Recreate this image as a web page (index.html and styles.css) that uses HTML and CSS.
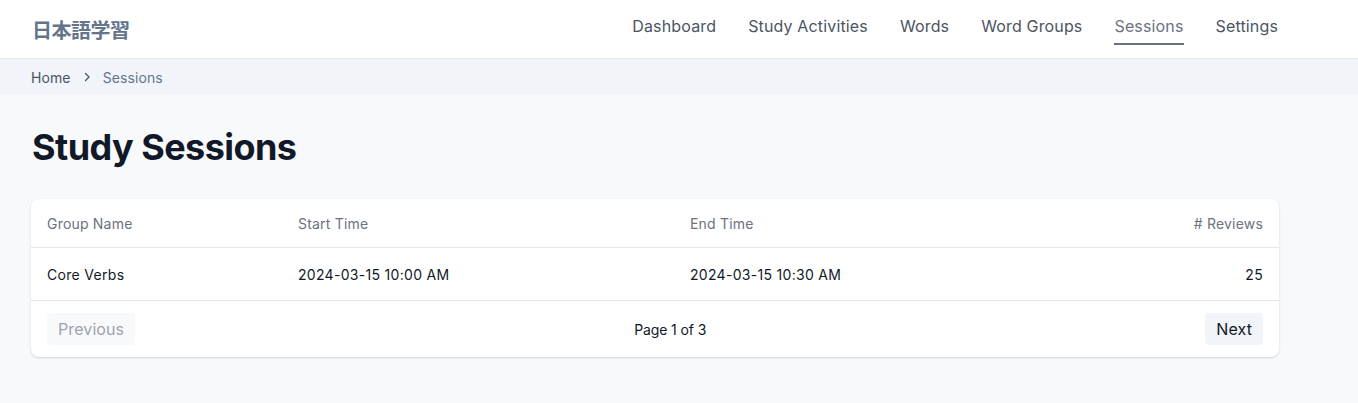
FILE: index.html
```html
<!DOCTYPE html>
<html lang="ja">
<head>
<meta charset="utf-8">
<title>日本語学習 - Sessions</title>
<link rel="stylesheet" href="styles.css">
</head>
<body>
<header class="topbar">
  <div class="container topbar-inner">
    <div class="logo">日本語学習</div>
    <nav class="nav">
      <a class="nav-link">Dashboard</a>
      <a class="nav-link">Study Activities</a>
      <a class="nav-link">Words</a>
      <a class="nav-link">Word Groups</a>
      <a class="nav-link active">Sessions</a>
      <a class="nav-link">Settings</a>
    </nav>
  </div>
</header>
<div class="crumbbar">
  <div class="container crumbs">
    <span class="crumb">Home</span>
    <svg class="chev" width="12" height="12" viewBox="0 0 24 24" fill="none" stroke="currentColor" stroke-width="2.6" stroke-linecap="round" stroke-linejoin="round"><path d="M9 5l7 7-7 7"/></svg>
    <span class="crumb current">Sessions</span>
  </div>
</div>
<main class="container main">
  <h1 class="title">Study Sessions</h1>
  <div class="card">
    <div class="row head">
      <div class="cell">Group Name</div>
      <div class="cell">Start Time</div>
      <div class="cell">End Time</div>
      <div class="cell right"># Reviews</div>
    </div>
    <div class="row body">
      <div class="cell">Core Verbs</div>
      <div class="cell">2024-03-15 10:00 AM</div>
      <div class="cell">2024-03-15 10:30 AM</div>
      <div class="cell right">25</div>
    </div>
    <div class="pager">
      <button class="btn disabled">Previous</button>
      <span class="page-info">Page 1 of 3</span>
      <button class="btn">Next</button>
    </div>
  </div>
</main>
</body>
</html>
```
FILE: styles.css
```css
* { box-sizing: border-box; }
html, body {
  margin: 0;
  padding: 0;
}
body {
  background: #f8f9fb;
  font-family: Inter, "Noto Sans", "Noto Sans CJK JP", sans-serif;
  color: #111827;
  min-height: 403px;
}
.container {
  max-width: 1312px;
  padding: 0 32px;
}
.topbar {
  background: #ffffff;
  border-bottom: 1px solid #e5e7eb;
  height: 59px;
}
.topbar-inner {
  display: flex;
  justify-content: space-between;
  align-items: center;
  height: 58px;
}
.logo {
  font-family: "Noto Sans CJK JP", sans-serif;
  font-weight: 700;
  font-size: 20px;
  color: #64748b;
  letter-spacing: -0.5px;
}
.nav {
  display: flex;
  gap: 32px;
  height: 58px;
  align-items: stretch;
  margin-right: 2px;
}
.nav-link {
  font-size: 16px;
  color: #4b5563;
  display: flex;
  align-items: center;
  padding-bottom: 6px;
  letter-spacing: 0.15px;
  position: relative;
}
.nav-link.active {
  color: #6b7280;
}
.nav-link.active::after {
  content: "";
  position: absolute;
  left: 0;
  right: 0;
  top: 43px;
  height: 2px;
  background: #6b7280;
}
.crumbbar {
  background: #f1f4f9;
  height: 36px;
}
.crumbs {
  display: flex;
  align-items: center;
  height: 36px;
  gap: 10px;
  font-size: 14px;
  color: #4b5563;
  padding-left: 31px;
}
.crumb { letter-spacing: 0.1px; }
.crumb.current { color: #64748b; }
.chev { color: #4b5563; }
.main {
  padding-top: 28px;
}
.title {
  margin: 0;
  font-size: 36px;
  font-weight: 700;
  color: #111827;
  line-height: 48px;
  letter-spacing: -0.55px;
}
.card {
  margin-top: 28px;
  background: #ffffff;
  border-radius: 8px;
  box-shadow: 0 1px 3px rgba(0,0,0,0.1), 0 1px 2px rgba(0,0,0,0.06);
  width: 1248px;
  margin-left: -1px;
}
.row {
  display: grid;
  grid-template-columns: 251px 392px 1fr auto;
  border-bottom: 1px solid #e5e7eb;
  align-items: center;
  font-size: 14px;
}
.row.head {
  height: 49px;
  color: #6b7280;
  letter-spacing: 0.2px;
}
.row.body {
  height: 53px;
  color: #111827;
  letter-spacing: 0.3px;
}
.cell {
  padding: 0 16px;
}
.cell.right { text-align: right; }
.pager {
  display: flex;
  justify-content: space-between;
  align-items: center;
  height: 56px;
  padding: 0 16px;
}
.btn {
  font-family: inherit;
  font-size: 16px;
  border: none;
  border-radius: 4px;
  height: 32px;
  padding: 0 11px;
  background: #f1f4f9;
  color: #111827;
  letter-spacing: 0.1px;
}
.btn.disabled {
  background: #f8f9fb;
  color: #9ca3af;
}
.page-info {
  font-size: 14px;
  color: #111827;
  letter-spacing: -0.1px;
}
```
